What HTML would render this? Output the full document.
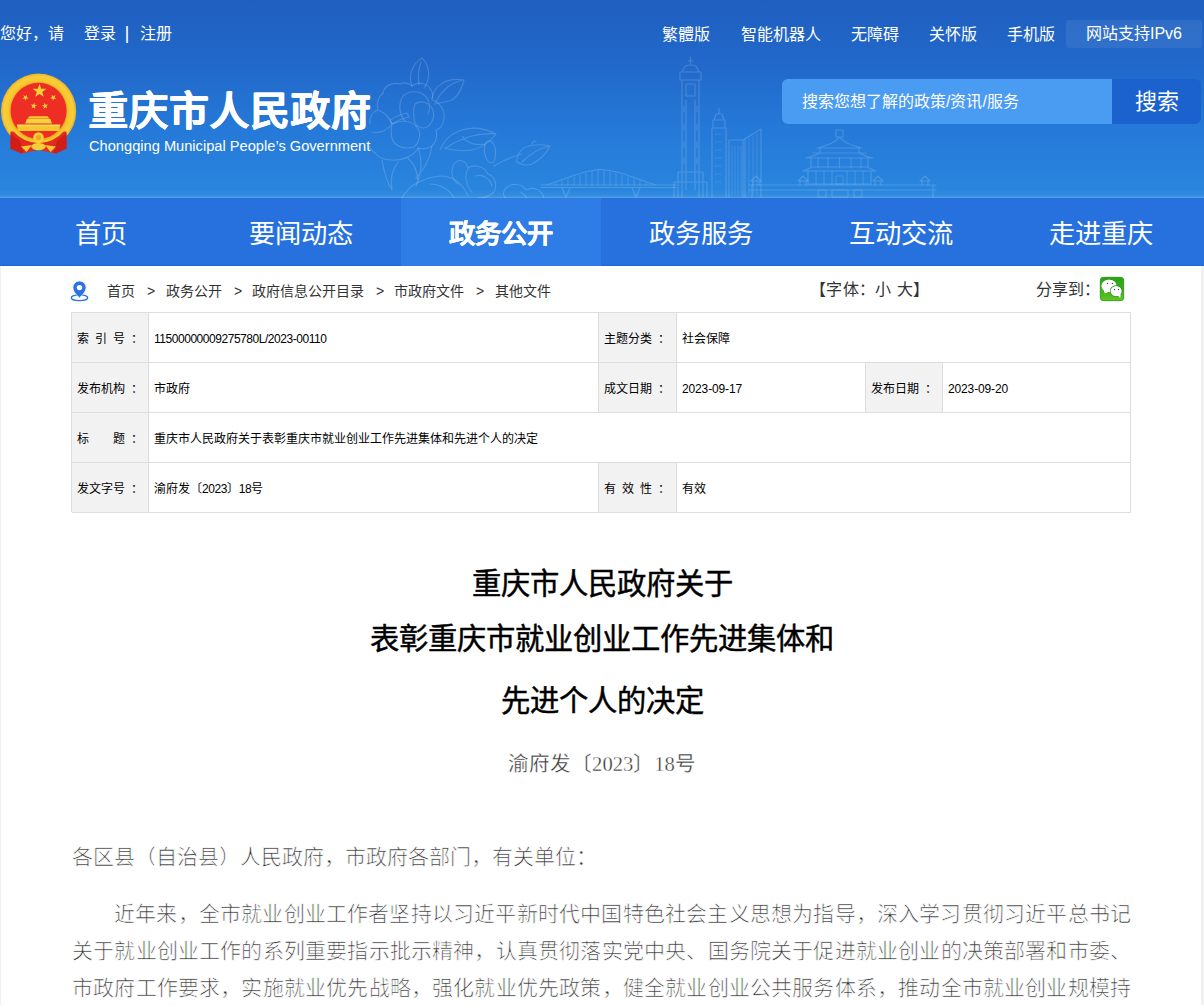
<!DOCTYPE html>
<html lang="zh-CN">
<head>
<meta charset="utf-8">
<title>重庆市人民政府</title>
<style>
*{box-sizing:border-box;margin:0;padding:0}
html,body{width:1204px;height:1005px;overflow:hidden;background:#f1f1f1}
body{font-family:"Liberation Sans",sans-serif;color:#333;position:relative}
#white{position:absolute;left:1px;top:266px;width:1200px;height:739px;background:#fff}
#page{position:absolute;left:2px;top:0;width:1200px;height:1005px}
/* header */
#hd{position:absolute;left:-2px;top:0;width:1204px;height:198px;background:linear-gradient(180deg,#1f5fc0 0%,#2167c9 30%,#2579d8 65%,#2987df 100%);overflow:hidden}
#hdart{position:absolute;left:0;top:0;width:1204px;height:198px;filter:blur(.35px)}
#hdglow{position:absolute;left:0;top:190px;width:1204px;height:8px;background:linear-gradient(180deg,rgba(255,255,255,0),rgba(255,255,255,.05) 70%,rgba(255,255,255,.22))}
.tl{position:absolute;top:23px;left:-2px;color:#fff;font-size:16px;line-height:22px;white-space:nowrap}
.tl span{position:absolute;top:0}
.tr{position:absolute;top:21px;height:28px;color:#fff;font-size:16px;line-height:28px;white-space:nowrap}
.tr a{position:absolute;top:0;color:#fff;text-decoration:none}
#ipv6{position:absolute;left:1064px;top:20px;width:136px;height:28px;background:rgba(255,255,255,.075);border-radius:3px;color:#fff;font-size:16px;line-height:28px;text-align:center}
#emblem{position:absolute;left:-2px;top:60px;width:100px;height:100px}
#ttl{position:absolute;left:86.5px;top:85px;color:#fff;font-size:39.3px;line-height:52px;font-weight:bold;white-space:nowrap;letter-spacing:1.45px;text-shadow:.45px 0 #fff,-.45px 0 #fff,0 .3px #fff}
#eng{position:absolute;left:87px;top:137px;color:#fff;font-size:14.65px;line-height:18px;white-space:nowrap}
#sbox{position:absolute;left:780px;top:79px;width:331px;height:45px;background:#4a9bf2;border-radius:6px 0 0 6px;color:#fff;font-size:16px;line-height:45px;padding-left:20px;white-space:nowrap}
#sbtn{position:absolute;left:1110px;top:79px;width:89px;height:45px;background:#1b62cf;border-radius:0 6px 6px 0;color:#fff;font-size:22px;line-height:45px;text-align:center}
/* nav */
#nav{position:absolute;left:-2px;top:198px;width:1204px;height:68px;background:#2671de;border-bottom:1px solid #1a66dd}
#nav div{position:absolute;top:0;width:200px;height:68px;color:#fff;font-size:26.3px;line-height:68px;padding-top:2px;text-align:center;white-space:nowrap}
#nav div.on{background:#2e7ce6;font-weight:bold;text-shadow:.3px 0 #fff,-.3px 0 #fff}
/* crumbs */
#crumb{position:absolute;left:105px;top:281px;font-size:14px;line-height:20px;color:#333;white-space:nowrap}
#crumb span{position:absolute;top:0}
#fsz{position:absolute;left:808px;top:279px;letter-spacing:.35px;font-size:16px;line-height:22px;color:#333;white-space:nowrap}
#shr{position:absolute;left:1034px;top:279px;font-size:16px;line-height:22px;color:#333;white-space:nowrap}
#loc{position:absolute;left:58px;top:270px}
#wx{position:absolute;left:1088px;top:270px}
/* table */
#tb{position:absolute;left:69px;top:312px;width:1060px;height:200px;border-top:1px solid #ddd;border-left:1px solid #ddd;font-size:12px;color:#000}
#tb .c{position:absolute;height:50px;border-right:1px solid #ddd;border-bottom:1px solid #ddd;line-height:49px;padding-top:2px;padding-left:5px;white-space:nowrap;overflow:hidden}
#tb .l{background:#f2f2f2}
#tb i{font-style:normal;letter-spacing:-0.46px}
#tb i.d{letter-spacing:-0.14px}
/* article */
#h1 div{position:absolute;left:0;width:1200px;height:40px;text-align:center;font-family:"Liberation Serif",serif;font-weight:normal;font-size:29.3px;line-height:40px;color:#000;-webkit-text-stroke:0.45px #000;white-space:nowrap}
#no{position:absolute;left:0;top:743.5px;width:1200px;text-align:center;font-family:"Liberation Serif",serif;font-size:20.6px;line-height:40px;color:#333;-webkit-text-stroke:0.35px #fff;white-space:nowrap}
#bd{position:absolute;left:70px;top:0;width:1059px;font-family:"Liberation Serif",serif;font-size:21px;line-height:38px;color:#333;-webkit-text-stroke:0.7px #fff}
#bd p{position:absolute;left:0;width:1059px;height:38px;white-space:nowrap;text-align:justify;text-align-last:justify}
</style>
</head>
<body>
<div id="white"></div>
<div id="page">
  <div id="hd">
    <svg id="hdart" width="1204" height="198" viewBox="0 0 1204 198" fill="none" stroke="#fff" stroke-width="1.15" stroke-opacity="0.17" stroke-linecap="round" stroke-linejoin="round">
      <!-- big camellia -->
      <path d="M383 93 C384 86 392 82 400 84 C404 82 409 83 412 86 C418 81 428 83 431 90 C433 93 433 97 432 100 C440 102 445 110 444 119 C443 125 440 129 436 130 C438 138 435 146 428 148 C424 149 420 149 418 148 C414 156 402 161 392 160 C384 160 378 157 375 153 C372 151 370 149 369 146"/>
      <path d="M383 93 C378 97 376 104 378 110 C372 112 369 118 370 124 M378 110 C384 112 390 118 392 124 C388 130 380 134 372 132 M392 124 C400 120 410 120 416 126 C422 132 420 142 414 147 C404 150 394 146 392 138 C391 133 391 128 392 124"/>
      <path d="M403 96 C398 104 399 114 405 121 M403 96 C408 91 418 90 424 95 C430 100 431 108 428 114 M415 104 C420 100 428 102 432 108 C436 116 432 126 424 128 C420 128 417 126 415 123 C413 116 413 110 415 104 Z"/>
      <path d="M390 120 C396 116 402 114 407 113 L409 117 C403 118 397 121 392 124 Z"/>
      <path d="M412 86 C408 76 412 64 422 58 C430 66 431 78 424 88 M421 62 C418 70 418 78 419 85"/>
      <path d="M432 98 C434 86 446 77 464 80 C462 88 458 96 452 100 C446 102 440 103 434 104 M464 80 C452 82 442 90 436 102"/>
      <path d="M440 150 C446 134 468 120 496 134 C490 142 482 148 472 150 C462 152 452 150 444 148 M496 134 C480 132 460 138 446 148 M462 136 C466 142 474 146 484 144"/>
      <path d="M418 148 C422 158 422 172 416 186 M408 158 C414 164 418 172 418 182 M382 160 C384 172 388 184 392 190 M392 190 C390 180 392 170 398 162 M432 146 C430 158 424 170 416 178"/>
      <path d="M486 142 C492 138 497 146 495 158 C494 164 490 164 487 160 C484 154 483 148 486 142 Z"/>
      <path d="M494 166 C504 160 514 156 522 154 M518 156 C520 148 530 142 550 146 C546 154 540 160 532 164 C526 166 520 164 517 162 C516 160 517 158 518 156 Z M550 146 C540 148 530 154 522 162"/>
      <path d="M532 144 C533 141 535 140 536 142"/>
      <path d="M454 164 C458 158 466 160 468 168 C474 164 484 166 488 174 C494 176 498 184 494 192 C490 196 484 198 478 198 M454 164 C450 170 452 180 458 184 M468 168 C464 176 466 186 472 192 M476 176 C482 174 490 178 492 186"/>
      <path d="M402 198 C408 186 422 178 440 176 C452 176 462 182 468 196 M430 184 C440 184 450 190 454 198"/>
      <path d="M506 188 C512 182 522 184 526 190 C534 186 542 190 544 198 M506 188 C502 192 503 196 506 198 M520 192 C524 194 526 196 527 198"/>
      <!-- bridge -->
      <path d="M541 185 H676 M541 187.5 H676 M545 185 C560 182 580 170 601 169.5 C622 170 642 182 657 185 M562 188 L566 197 M570 188 L566 197 M632 188 L636 197 M640 188 L636 197"/>
      <path d="M556 183 V185 M562 181 V185 M568 179 V185 M574 177 V185 M580 175 V185 M586 173 V185 M592 171.5 V185 M598 170 V185 M604 170 V185 M610 171.5 V185 M616 173 V185 M622 175 V185 M628 177 V185 M634 179 V185 M640 181 V185 M646 183 V185" stroke-opacity="0.14"/>
      <!-- liberation monument tower -->
      <path d="M690.5 57 V64 M688 61 H693 M684 68 C686 64 695 64 697 68 L699 72 H682 Z M680 72 H701 V80 H680 Z M682 80 V197 M699 80 V197 M686 84 H695 V96 H686 Z M686 100 V190 M695 100 V190 M678 172 H703 V197 M678 172 V197 M674 182 H707 V197 M674 182 V197"/>
      <path d="M684 106 V112 M697 106 V112 M684 124 V130 M697 124 V130 M684 142 V148 M697 142 V148 M684 158 V164 M697 158 V164" stroke-opacity="0.14"/>
      <!-- tower 2 -->
      <path d="M719 108 V114 M716 114 H722 L724 120 H714 Z M713 120 H725 V128 H713 Z M712 128 H726 V197 M712 128 V197"/>
      <path d="M715 134 H723 M715 142 H723 M715 150 H723 M715 158 H723 M715 166 H723 M715 174 H723 M715 182 H723" stroke-opacity="0.13" stroke-dasharray="2 2"/>
      <!-- slab building -->
      <path d="M729 140 H743 V197 M729 140 V197 M743 140 L761 129 V197 M745 140 V197"/>
      <path d="M732 146 V194 M735 146 V194 M738 146 V194 M741 146 V194 M749 138 V194 M753 136 V194 M757 134 V194" stroke-opacity="0.1"/>
      <!-- great hall -->
      <path d="M836 130 H843 V137 H836 Z M839.5 137 C836 142 826 146 817 148 H862 C853 146 843 142 839.5 137 Z M820 148 V153 H859 V148 M813 153 H866 M806 158 C812 157 816 155 820 153 M873 158 C867 157 863 155 859 153 M806 158 H873 M811 158 V167 H868 V158 M803 171 C806 170 809 169 811 167 M876 171 C873 170 870 169 868 167 M803 171 H876 M808 171 V184 H871 V171"/>
      <path d="M818 158 V167 M828 158 V167 M839.5 158 V167 M851 158 V167 M861 158 V167 M816 171 V184 M824 171 V184 M832 171 V184 M847 171 V184 M855 171 V184 M863 171 V184 M836 176 H843 V184 H836 Z" stroke-opacity="0.14"/>
      <path d="M749 185 H936 M749 190 H936 M752 185 V197 M933 185 V197"/>
      <path d="M751 181 L756 176 L761 181 Z M753 181 V185 M759 181 V185 M798 181 L803 176 L808 181 Z M800 181 V185 M806 181 V185 M873 181 L878 176 L883 181 Z M875 181 V185 M881 181 V185 M920 181 L925 176 L930 181 Z M922 181 V185 M928 181 V185"/>
      <path d="M818 190 H826 V197 H818 Z M832 190 H848 V197 H832 Z M854 190 H862 V197 H854 Z" stroke-opacity="0.14"/>
    </svg>
    <div id="hdglow"></div>
  </div>
  <div class="tl"><span style="left:0">您好，请</span><span style="left:84px">登录</span><span style="left:124.5px;font-size:19px;top:-1.5px">|</span><span style="left:140px">注册</span></div>
  <div class="tr" style="left:0;width:1200px">
    <a style="left:660px">繁體版</a>
    <a style="left:739px">智能机器人</a>
    <a style="left:849px">无障碍</a>
    <a style="left:927px">关怀版</a>
    <a style="left:1005px">手机版</a>
  </div>
  <div id="ipv6">网站支持IPv6</div>
  <svg id="emblem" width="100" height="100" viewBox="0 60 100 100">
    <defs>
      <radialGradient id="gold" cx="0.5" cy="0.5" r="0.5">
        <stop offset="0.74" stop-color="#e9a51f"/><stop offset="0.80" stop-color="#f6c62e"/><stop offset="0.92" stop-color="#f7cf3a"/><stop offset="1" stop-color="#eeb225"/>
      </radialGradient>
    </defs>
    <circle cx="38.6" cy="111.2" r="37.6" fill="url(#gold)"/>
    <circle cx="38.6" cy="110.8" r="28" fill="#ee2d24"/>
    <polygon points="39.50,83.80 41.19,88.67 46.35,88.78 42.24,91.89 43.73,96.82 39.50,93.88 35.27,96.82 36.76,91.89 32.65,88.78 37.81,88.67" fill="#f9d335"/>
    <polygon points="27.15,94.64 26.71,96.96 28.73,98.19 26.38,98.48 25.84,100.78 24.84,98.64 22.49,98.84 24.21,97.23 23.29,95.05 25.36,96.19" fill="#f9d335"/>
    <polygon points="51.65,94.64 53.44,96.19 55.51,95.05 54.59,97.23 56.31,98.84 53.96,98.64 52.96,100.78 52.42,98.48 50.07,98.19 52.09,96.96" fill="#f9d335"/>
    <polygon points="34.37,102.75 34.75,105.08 37.07,105.54 34.97,106.62 35.25,108.97 33.57,107.30 31.43,108.29 32.49,106.18 30.89,104.45 33.22,104.81" fill="#f9d335"/>
    <polygon points="44.43,102.75 45.58,104.81 47.91,104.45 46.31,106.18 47.37,108.29 45.23,107.30 43.55,108.97 43.83,106.62 41.73,105.54 44.05,105.08" fill="#f9d335"/>
    <path d="M29.5 116.3 H47.5 L49.5 118.6 H27.5 Z" fill="#f7c933"/>
    <path d="M27 118.8 H50.2 L52 123.6 H25.2 Z" fill="#f8d23c"/>
    <path d="M17 124.8 H60.2 L59.4 131 H17.8 Z" fill="#f7c52f"/>
    <rect x="17" y="124.6" width="43.2" height="1.6" fill="#fbdc55"/>
    <path d="M10.6 131.5 L13.6 131.5 A32.6 32.6 0 0 0 63.6 131.5 L66.4 131.5 L66.6 148.5 L55.5 153.4 L38.5 150 L21.5 153.4 L10.4 148.5 Z" fill="#e22a1f"/>
    <path d="M10.6 133 L20 141 L23.5 153 L21.5 153.4 L10.4 148.5 Z" fill="#d01d17"/>
    <path d="M66.4 133 L57 141 L53.5 153 L55.5 153.4 L66.6 148.5 Z" fill="#d01d17"/>
    <path d="M21 146.5 L32 145 L26.5 152 Z" fill="#f6c733"/>
    <path d="M56 146.5 L45 145 L50.5 152 Z" fill="#f6c733"/>
    <circle cx="38.5" cy="137.6" r="5.3" fill="#f7cd38"/>
    <circle cx="38.5" cy="137.6" r="2.6" fill="#eaa822"/>
    <ellipse cx="38.5" cy="146.6" rx="7.2" ry="3.6" fill="#f7cd38"/>
  </svg>
  <div id="ttl">重庆市人民政府</div>
  <div id="eng">Chongqing Municipal People’s Government</div>
  <div id="sbox">搜索您想了解的政策/资讯/服务</div>
  <div id="sbtn">搜索</div>

  <div id="nav">
    <div style="left:1px">首页</div>
    <div style="left:201px">要闻动态</div>
    <div class="on" style="left:401px">政务公开</div>
    <div style="left:601px">政务服务</div>
    <div style="left:801px">互动交流</div>
    <div style="left:1001px">走进重庆</div>
  </div>

  <div id="crumb">
    <span style="left:0">首页</span><span style="left:40px">&gt;</span>
    <span style="left:59px">政务公开</span><span style="left:127px">&gt;</span>
    <span style="left:145px">政府信息公开目录</span><span style="left:269px">&gt;</span>
    <span style="left:287px">市政府文件</span><span style="left:369px">&gt;</span>
    <span style="left:388px">其他文件</span>
  </div>
  <svg id="loc" width="40" height="40" viewBox="60 270 40 40">
    <ellipse cx="79.5" cy="297.7" rx="8.2" ry="2.9" fill="none" stroke="#2a73e0" stroke-width="1.3"/>
    <path d="M79.5 297.9 C76.5 295 72.9 291.6 72.9 287.5 A6.6 6.6 0 0 1 86.1 287.5 C86.1 291.6 82.5 295 79.5 297.9 Z" fill="#2a73e0" stroke="#fff" stroke-width="0.8"/>
    <circle cx="79.5" cy="287.6" r="2.7" fill="#fff"/>
  </svg>
  <svg id="wx" width="44" height="40" viewBox="1090 270 44 40">
    <defs><linearGradient id="wg" x1="0" y1="0" x2="0" y2="1"><stop offset="0" stop-color="#2aa018"/><stop offset="0.5" stop-color="#3bb01b"/><stop offset="1" stop-color="#62c521"/></linearGradient></defs>
    <rect x="1100.3" y="277.3" width="23.4" height="23.4" rx="3.2" fill="url(#wg)" stroke="#1f9215" stroke-width="0.8"/>
    <path d="M1105.2 293.4 L1104.6 290.9 A7.3 6.1 0 1 1 1109.3 292 L1108 292 Z" fill="#fff"/>
    <ellipse cx="1109.3" cy="285.9" rx="7.3" ry="6.1" fill="#fff"/>
    <path d="M1104 289.5 L1104.6 293.2 L1107.8 291.6 Z" fill="#fff"/>
    <ellipse cx="1116.1" cy="291.1" rx="6.3" ry="5.9" fill="#1f8e16"/>
    <ellipse cx="1116.1" cy="291.1" rx="5.6" ry="5.2" fill="#fff"/>
    <path d="M1117.6 295.5 L1120.2 298 L1120.8 294 Z" fill="#fff"/>
    <circle cx="1107.5" cy="283.5" r="0.75" fill="#54405f"/><circle cx="1112.5" cy="283.5" r="0.75" fill="#54405f"/>
    <circle cx="1114.5" cy="289.5" r="0.7" fill="#54405f"/><circle cx="1118.5" cy="289.5" r="0.7" fill="#54405f"/>
  </svg>
  <div id="fsz">【字体：小 大】</div>
  <div id="shr">分享到：</div>

  <div id="tb">
    <div class="c l" style="left:0;top:0;width:77px">索&ensp;引&ensp;号&ensp;：</div>
    <div class="c" style="left:77px;top:0;width:450px"><i>11500000009275780L/2023-00110</i></div>
    <div class="c l" style="left:527px;top:0;width:78px">主题分类&ensp;：</div>
    <div class="c" style="left:605px;top:0;width:454px">社会保障</div>

    <div class="c l" style="left:0;top:50px;width:77px">发布机构&ensp;：</div>
    <div class="c" style="left:77px;top:50px;width:450px">市政府</div>
    <div class="c l" style="left:527px;top:50px;width:78px">成文日期&ensp;：</div>
    <div class="c" style="left:605px;top:50px;width:189px"><i class="d">2023-09-17</i></div>
    <div class="c l" style="left:794px;top:50px;width:77px">发布日期&ensp;：</div>
    <div class="c" style="left:871px;top:50px;width:188px"><i class="d">2023-09-20</i></div>

    <div class="c l" style="left:0;top:100px;width:77px">标　　题&ensp;：</div>
    <div class="c" style="left:77px;top:100px;width:982px">重庆市人民政府关于表彰重庆市就业创业工作先进集体和先进个人的决定</div>

    <div class="c l" style="left:0;top:150px;width:77px">发文字号&ensp;：</div>
    <div class="c" style="left:77px;top:150px;width:450px">渝府发〔<i>2023</i>〕<i>18</i>号</div>
    <div class="c l" style="left:527px;top:150px;width:78px">有&ensp;效&ensp;性&ensp;：</div>
    <div class="c" style="left:605px;top:150px;width:454px">有效</div>
  </div>

  <div id="h1"><div style="top:564px">重庆市人民政府关于</div><div style="top:619px">表彰重庆市就业创业工作先进集体和</div><div style="top:681px">先进个人的决定</div></div>
  <div id="no">渝府发〔2023〕18号</div>

  <div id="bd">
    <p style="top:838px;text-align-last:left">各区县（自治县）人民政府，市政府各部门，有关单位：</p>
    <p style="top:895px;padding-left:42px">近年来，全市就业创业工作者坚持以习近平新时代中国特色社会主义思想为指导，深入学习贯彻习近平总书记</p>
    <p style="top:932px">关于就业创业工作的系列重要指示批示精神，认真贯彻落实党中央、国务院关于促进就业创业的决策部署和市委、</p>
    <p style="top:969px">市政府工作要求，实施就业优先战略，强化就业优先政策，健全就业创业公共服务体系，推动全市就业创业规模持</p>
  </div>
</div>
</body>
</html>
